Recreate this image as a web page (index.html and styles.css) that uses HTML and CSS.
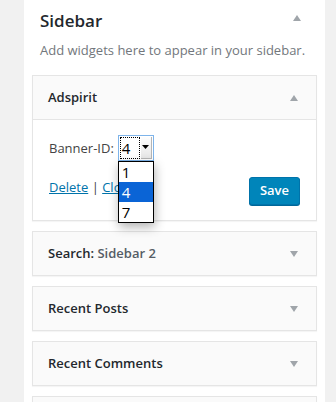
FILE: index.html
```html
<!DOCTYPE html>
<html lang="en">
<head>
    <meta charset="UTF-8">
    <meta name="viewport" content="width=device-width, initial-scale=1.0">
    <title>Widgets</title>
    <link rel="stylesheet" href="styles.css">
</head>
<body>
    <div class="sidebar">
        <div class="sidebar-name">
            <h2>Sidebar</h2>
            <svg class="arrow arrow-head" width="8" height="6" viewBox="0 0 8 6"><polygon points="0,6 4,0 8,6"/></svg>
        </div>
        <p class="sidebar-desc">Add widgets here to appear in your sidebar.</p>

        <div class="widget">
            <div class="widget-top">
                <h3>Adspirit</h3>
                <svg class="arrow" width="8" height="6" viewBox="0 0 8 6"><polygon points="0,6 4,0 8,6"/></svg>
            </div>
            <div class="widget-inside">
                <div class="field">
                    <label for="bannerID">Banner-ID:</label>
                    <div class="select-wrap">
                        <div class="select" id="bannerID">
                            <span class="select-value">4</span>
                            <span class="select-btn"><svg width="7" height="4" viewBox="0 0 7 4"><polygon points="0,0 7,0 3.5,4"/></svg></span>
                        </div>
                        <ul class="select-list">
                            <li>1</li>
                            <li class="selected">4</li>
                            <li>7</li>
                        </ul>
                    </div>
                </div>
                <div class="widget-actions">
                    <div class="links"><a href="#">Delete</a> | <a href="#">Close</a></div>
                    <button type="button">Save</button>
                </div>
            </div>
        </div>

        <div class="widget">
            <div class="widget-top">
                <h3>Search:<span class="in-title"> Sidebar 2</span></h3>
                <svg class="arrow" width="8" height="6" viewBox="0 0 8 6"><polygon points="0,0 8,0 4,6"/></svg>
            </div>
        </div>

        <div class="widget">
            <div class="widget-top">
                <h3>Recent Posts</h3>
                <svg class="arrow" width="8" height="6" viewBox="0 0 8 6"><polygon points="0,0 8,0 4,6"/></svg>
            </div>
        </div>

        <div class="widget">
            <div class="widget-top">
                <h3>Recent Comments</h3>
                <svg class="arrow" width="8" height="6" viewBox="0 0 8 6"><polygon points="0,0 8,0 4,6"/></svg>
            </div>
        </div>

        <!-- next widget, only its top edge shows -->
        <div class="widget widget-more"></div>
    </div>
</body>
</html>
```

FILE: styles.css
```css
body {
    font-family: 'Open Sans', 'Noto Sans', sans-serif;
    font-size: 13px;
    background-color: #f1f1f1;
    color: #444;
    margin: 0;
    padding: 0;
}
.sidebar {
    width: 301px;
    margin-left: 24px;
    background-color: white;
    height: 402px;
    overflow: hidden;
}
.sidebar-name {
    display: flex;
    justify-content: space-between;
    align-items: center;
    padding: 9px 24px 0 16px;
}
.sidebar-name h2 {
    margin: 0;
    font-size: 17px;
    line-height: 24px;
    font-weight: 600;
    color: #23282d;
}
.arrow {
    display: block;
    fill: #a0a5aa;
}
.arrow-head {
    margin-top: -7px;
}
.sidebar-desc {
    margin: 8px 0 16px;
    padding: 0 16px;
    line-height: 18px;
    color: #72777c;
}
.widget {
    margin: 0 8px 10px;
    border: 1px solid #e5e5e5;
    box-shadow: 0 1px 1px rgba(0, 0, 0, 0.04);
    background-color: #fafafa;
}
.widget-more {
    height: 43px;
}
.widget-top {
    display: flex;
    justify-content: space-between;
    align-items: center;
    padding: 0 18px 0 15px;
}
.widget-top h3 {
    margin: 0;
    padding: 12px 0;
    font-size: 13px;
    line-height: 19px;
    font-weight: 600;
    color: #23282d;
}
.in-title {
    color: #555d66;
}
.widget-inside {
    background-color: white;
    border-top: 1px solid #e5e5e5;
    padding: 15px 15px 15px 16px;
}
.field {
    display: flex;
    align-items: center;
    gap: 4px;
}
.field label {
    color: #444;
}
.select-wrap {
    position: relative;
}
.select {
    display: flex;
    width: 34px;
    height: 24px;
    border: 1px solid #7eb4ea;
    background-color: white;
}
.select-value {
    width: 17px;
    margin: 1px;
    border: 1px dotted #000;
    font-size: 15px;
    line-height: 20px;
    color: #000;
    padding-left: 1px;
}
.select-btn {
    flex: 1;
    display: flex;
    align-items: center;
    justify-content: center;
    margin: 1px 1px 1px 0;
    background: linear-gradient(to bottom, #fdfdfd, #e6e6e6);
    border-right: 1px solid #b5b5b5;
    border-bottom: 1px solid #b5b5b5;
}
.select-btn svg {
    fill: #000;
    margin-top: -1px;
}
.select-list {
    position: absolute;
    top: 26px;
    left: 0;
    width: 34px;
    margin: 0;
    padding: 0;
    list-style: none;
    background-color: white;
    border: 1px solid #000;
    box-shadow: 1px 4px 10px rgba(0, 0, 0, 0.3);
    z-index: 5;
}
.select-list li {
    height: 20px;
    line-height: 20px;
    padding-left: 3px;
    font-size: 15px;
    color: #000;
}
.select-list li.selected {
    background-color: #0a64d6;
    color: white;
}
.widget-actions {
    display: flex;
    justify-content: space-between;
    align-items: flex-start;
    margin-top: 16px;
}
.links {
    padding-top: 1px;
    line-height: 18px;
}
.links a {
    color: #0073aa;
}
button {
    height: 28px;
    padding: 0 10px 2px;
    margin-right: 1px;
    font-family: 'Open Sans', sans-serif;
    font-size: 13px;
    font-weight: 600;
    color: white;
    background-color: #0085ba;
    border: 1px solid #0073aa;
    border-radius: 3px;
    box-shadow: 0 1px 0 #006799;
    cursor: pointer;
}
```
